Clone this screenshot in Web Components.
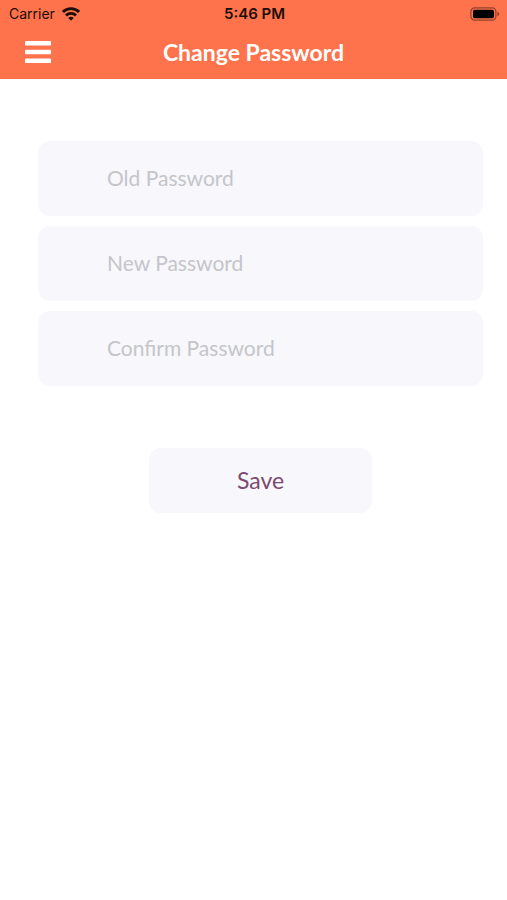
<!DOCTYPE html>
<html lang="en">
<head>
<meta charset="utf-8">
<meta name="viewport" content="width=device-width, initial-scale=1">
<title>Change Password</title>
<style>
  body { margin: 0; background: #fff; font-family: Lato, "Open Sans", sans-serif; }
</style>
</head>
<body>
<change-password-page></change-password-page>

<template id="status-bar">
  <style>
    :host { display: grid; grid-template-columns: 1fr auto 1fr; align-items: center; height: 27px; padding: 0 7px 0 9px; color: #1c0d08; font: 400 14px/20px Inter, "Liberation Sans", sans-serif; }
    .left { display: flex; align-items: center; gap: 7px; }
    .time { font-size: 15px; font-weight: 600; }
    .battery { justify-self: end; }
    svg { display: block; }
  </style>
  <span class="left"><span>Carrier</span>
    <svg width="18" height="14" viewBox="0 0 18 14" fill="none" stroke="#1c0d08" stroke-width="2.8" aria-label="Wi-Fi">
      <path d="M.9 4.9a11.6 11.6 0 0 1 16.2 0"/>
      <path d="M4 8.4a7.2 7.2 0 0 1 10 0"/>
      <path d="M9 13.8 6.3 11a3.9 3.9 0 0 1 5.4 0z" fill="#1c0d08" stroke="none"/>
    </svg>
  </span>
  <span class="time">5:46 PM</span>
  <svg class="battery" width="30" height="14" viewBox="0 0 30 14" aria-label="Battery full">
    <rect x=".9" y=".9" width="25" height="12.2" rx="3.6" fill="none" stroke="#93412b" stroke-width="1.2"/>
    <rect x="3" y="2.8" width="21" height="8.4" rx="1.6" fill="#000"/>
    <path d="M27.4 4.8c2.4.8 2.4 3.6 0 4.4z" fill="#93412b"/>
  </svg>
</template>

<template id="nav-bar">
  <style>
    :host { display: grid; grid-template-columns: 1fr auto 1fr; align-items: center; height: 50px; padding: 0 25px 2px; color: #fff; }
    button { justify-self: start; border: 0; padding: 0; background: none; cursor: pointer; }
    svg { display: block; }
    h1 { margin: 0; font-size: 23px; line-height: 28px; font-weight: 700; }
  </style>
  <button type="button" aria-label="Menu">
    <svg width="26" height="24" viewBox="0 0 26 24" fill="#fff">
      <rect y="1" width="26" height="4.6" rx=".6"/><rect y="9.7" width="26" height="4.6" rx=".6"/><rect y="18.4" width="26" height="4.6" rx=".6"/>
    </svg>
  </button>
  <h1><slot></slot></h1>
</template>

<template id="password-field">
  <style>
    :host { display: block; }
    input { display: block; box-sizing: border-box; width: 100%; height: 75px; padding: 0 24px 2px 69px; border: 0; border-radius: 12px; background: #f7f7fc; color: #7a4a70; font: 400 21px/28px Lato, "Open Sans", sans-serif; }
    input::placeholder { color: #c5c5ca; opacity: 1; }
  </style>
  <input type="password">
</template>

<template id="save-button">
  <style>
    :host { display: block; }
    button { display: block; width: 100%; height: 65px; padding: 0 0 2px; border: 0; border-radius: 12px; background: #f7f7fc; color: #7c4a70; font: 400 23px/28px Lato, "Open Sans", sans-serif; cursor: pointer; }
  </style>
  <button type="button"><slot></slot></button>
</template>

<template id="change-password-page">
  <style>
    :host { display: block; }
    header { background: #ff734c; }
    main { display: flex; flex-direction: column; gap: 10px; padding: 62px 24px 24px 38px; }
    save-button { align-self: center; width: 50%; margin-top: 52px; }
  </style>
  <header>
    <status-bar></status-bar>
    <nav-bar>Change Password</nav-bar>
  </header>
  <main>
    <password-field label="Old Password"></password-field>
    <password-field label="New Password"></password-field>
    <password-field label="Confirm Password"></password-field>
    <save-button>Save</save-button>
  </main>
</template>

<script>
  class TemplateElement extends HTMLElement {
    constructor() {
      super();
      const template = document.getElementById(this.localName);
      this.attachShadow({ mode: "open" }).append(template.content.cloneNode(true));
    }
  }
  class PasswordField extends TemplateElement {
    connectedCallback() {
      const input = this.shadowRoot.querySelector("input");
      const label = this.getAttribute("label");
      input.placeholder = label;
      input.setAttribute("aria-label", label);
    }
  }
  customElements.define("status-bar", class extends TemplateElement {});
  customElements.define("nav-bar", class extends TemplateElement {});
  customElements.define("password-field", PasswordField);
  customElements.define("save-button", class extends TemplateElement {});
  customElements.define("change-password-page", class extends TemplateElement {});
</script>
</body>
</html>
